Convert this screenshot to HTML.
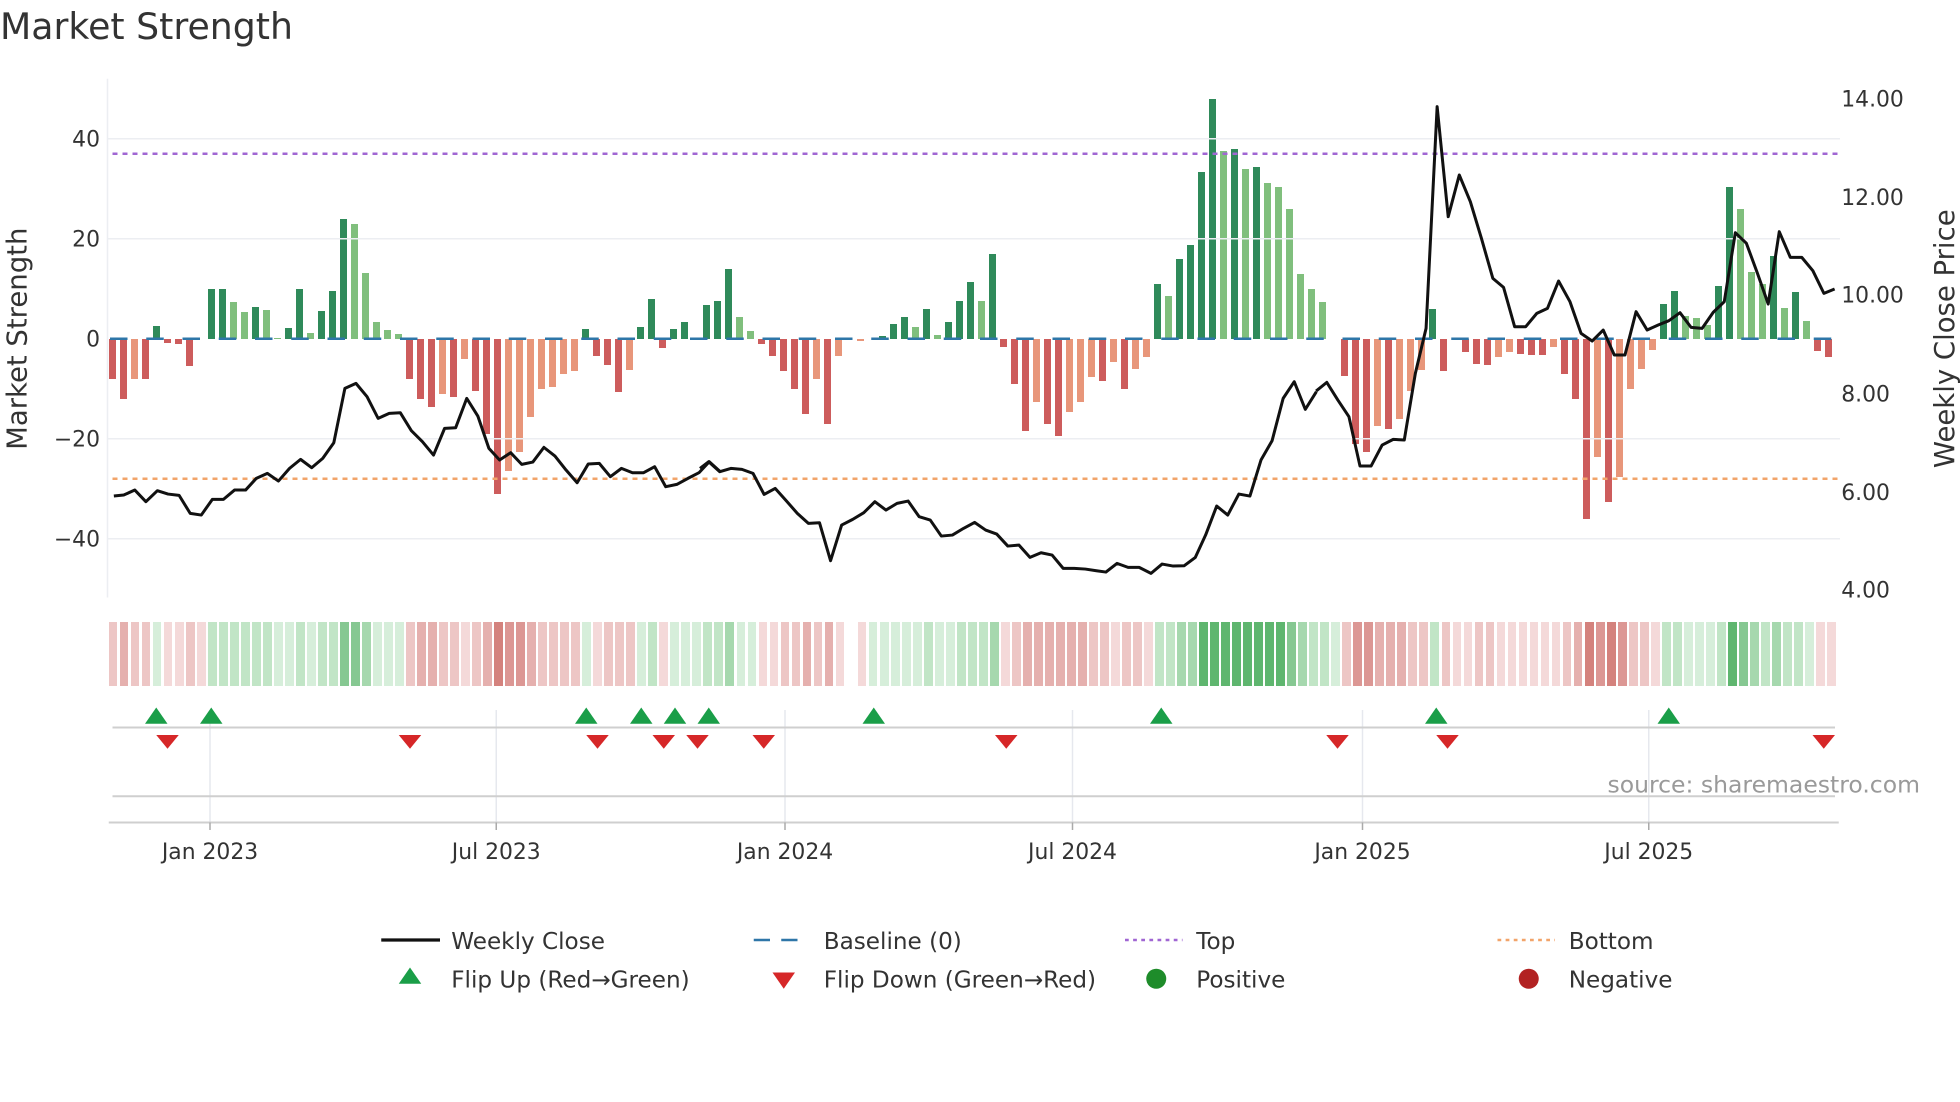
<!DOCTYPE html>
<html><head><meta charset="utf-8">
<style>
html,body{margin:0;padding:0;background:#fff;width:1960px;height:1102px;overflow:hidden;font-family:"DejaVu Sans","Liberation Sans",sans-serif}
#bars{position:absolute;left:107px;top:339px;height:0;display:flex;align-items:flex-start}
#bars b{flex:none;display:block;width:7.2px;margin:0 1.92px}
#bars b.G,#bars b.g,#bars b.z{transform:translateY(-100%)}
.G{background:#2f8a5a}.g{background:#80bf7d}.R{background:#cd5c5c}.r{background:#e8967a}
#strip{position:absolute;left:107.5px;top:622px;height:64px;display:flex}
#strip i{flex:none;display:block;width:8.8px;margin:0 1.12px;height:64px}
.r1{background:#f4d9d9}.r2{background:#edc6c5}.r3{background:#e5b0ae}.r4{background:#dc9794}.r5{background:#d4827d}
.g1{background:#d6eeda}.g2{background:#c1e5c6}.g3{background:#a6d8ae}.g4{background:#86c892}.g5{background:#5fb66f}.x0{background:transparent}
svg{position:absolute;left:0;top:0}
</style></head><body>
<div id="bars">
<b class="R" style="height:40px"></b><b class="R" style="height:60px"></b><b class="r" style="height:40px"></b><b class="R" style="height:40px"></b><b class="G" style="height:13px"></b><b class="R" style="height:4px"></b><b class="R" style="height:5px"></b><b class="R" style="height:27px"></b><b class="z" style="height:0"></b><b class="G" style="height:50px"></b>
<b class="G" style="height:50px"></b><b class="g" style="height:37px"></b><b class="g" style="height:27px"></b><b class="G" style="height:32px"></b><b class="g" style="height:29px"></b><b class="g" style="height:1px"></b><b class="G" style="height:11px"></b><b class="G" style="height:50px"></b><b class="g" style="height:6px"></b><b class="G" style="height:28px"></b>
<b class="G" style="height:48px"></b><b class="G" style="height:120px"></b><b class="g" style="height:115px"></b><b class="g" style="height:66px"></b><b class="g" style="height:17px"></b><b class="g" style="height:9px"></b><b class="g" style="height:5px"></b><b class="R" style="height:40px"></b><b class="R" style="height:60px"></b><b class="R" style="height:68px"></b>
<b class="r" style="height:55px"></b><b class="R" style="height:58px"></b><b class="r" style="height:20px"></b><b class="R" style="height:52px"></b><b class="R" style="height:95px"></b><b class="R" style="height:155px"></b><b class="r" style="height:132px"></b><b class="r" style="height:113px"></b><b class="r" style="height:78px"></b><b class="r" style="height:50px"></b>
<b class="r" style="height:48px"></b><b class="r" style="height:35px"></b><b class="r" style="height:32px"></b><b class="G" style="height:10px"></b><b class="R" style="height:17px"></b><b class="R" style="height:26px"></b><b class="R" style="height:53px"></b><b class="r" style="height:31px"></b><b class="G" style="height:12px"></b><b class="G" style="height:40px"></b>
<b class="R" style="height:9px"></b><b class="G" style="height:10px"></b><b class="G" style="height:17px"></b><b class="z" style="height:0"></b><b class="G" style="height:34px"></b><b class="G" style="height:38px"></b><b class="G" style="height:70px"></b><b class="g" style="height:22px"></b><b class="g" style="height:8px"></b><b class="R" style="height:5px"></b>
<b class="R" style="height:17px"></b><b class="R" style="height:32px"></b><b class="R" style="height:50px"></b><b class="R" style="height:75px"></b><b class="r" style="height:40px"></b><b class="R" style="height:85px"></b><b class="r" style="height:17px"></b><b class="z" style="height:0"></b><b class="r" style="height:2px"></b><b class="z" style="height:0"></b>
<b class="G" style="height:3px"></b><b class="G" style="height:15px"></b><b class="G" style="height:22px"></b><b class="g" style="height:12px"></b><b class="G" style="height:30px"></b><b class="g" style="height:4px"></b><b class="G" style="height:17px"></b><b class="G" style="height:38px"></b><b class="G" style="height:57px"></b><b class="g" style="height:38px"></b>
<b class="G" style="height:85px"></b><b class="R" style="height:8px"></b><b class="R" style="height:45px"></b><b class="R" style="height:92px"></b><b class="r" style="height:63px"></b><b class="R" style="height:85px"></b><b class="R" style="height:97px"></b><b class="r" style="height:73px"></b><b class="r" style="height:63px"></b><b class="r" style="height:38px"></b>
<b class="R" style="height:42px"></b><b class="r" style="height:23px"></b><b class="R" style="height:50px"></b><b class="r" style="height:30px"></b><b class="r" style="height:18px"></b><b class="G" style="height:55px"></b><b class="g" style="height:43px"></b><b class="G" style="height:80px"></b><b class="G" style="height:94px"></b><b class="G" style="height:167px"></b>
<b class="G" style="height:240px"></b><b class="g" style="height:188px"></b><b class="G" style="height:190px"></b><b class="g" style="height:170px"></b><b class="G" style="height:172px"></b><b class="g" style="height:156px"></b><b class="g" style="height:152px"></b><b class="g" style="height:130px"></b><b class="g" style="height:65px"></b><b class="g" style="height:50px"></b>
<b class="g" style="height:37px"></b><b class="z" style="height:0"></b><b class="R" style="height:37px"></b><b class="R" style="height:105px"></b><b class="R" style="height:113px"></b><b class="r" style="height:87px"></b><b class="R" style="height:90px"></b><b class="r" style="height:80px"></b><b class="r" style="height:52px"></b><b class="r" style="height:31px"></b>
<b class="G" style="height:30px"></b><b class="R" style="height:32px"></b><b class="z" style="height:0"></b><b class="R" style="height:13px"></b><b class="R" style="height:25px"></b><b class="R" style="height:26px"></b><b class="r" style="height:18px"></b><b class="r" style="height:13px"></b><b class="R" style="height:15px"></b><b class="R" style="height:16px"></b>
<b class="R" style="height:16px"></b><b class="r" style="height:8px"></b><b class="R" style="height:35px"></b><b class="R" style="height:60px"></b><b class="R" style="height:180px"></b><b class="r" style="height:118px"></b><b class="R" style="height:163px"></b><b class="r" style="height:138px"></b><b class="r" style="height:50px"></b><b class="r" style="height:30px"></b>
<b class="r" style="height:11px"></b><b class="G" style="height:35px"></b><b class="G" style="height:48px"></b><b class="g" style="height:23px"></b><b class="g" style="height:21px"></b><b class="g" style="height:14px"></b><b class="G" style="height:53px"></b><b class="G" style="height:152px"></b><b class="g" style="height:130px"></b><b class="g" style="height:67px"></b>
<b class="g" style="height:55px"></b><b class="G" style="height:83px"></b><b class="g" style="height:31px"></b><b class="G" style="height:47px"></b><b class="g" style="height:18px"></b><b class="R" style="height:12px"></b><b class="R" style="height:18px"></b>
</div>
<div id="strip">
<i class="r2"></i><i class="r3"></i><i class="r2"></i><i class="r2"></i><i class="g1"></i><i class="r1"></i><i class="r1"></i><i class="r2"></i><i class="r1"></i><i class="g2"></i>
<i class="g2"></i><i class="g2"></i><i class="g2"></i><i class="g2"></i><i class="g2"></i><i class="g1"></i><i class="g1"></i><i class="g2"></i><i class="g1"></i><i class="g2"></i>
<i class="g2"></i><i class="g4"></i><i class="g4"></i><i class="g3"></i><i class="g1"></i><i class="g1"></i><i class="g1"></i><i class="r2"></i><i class="r3"></i><i class="r3"></i>
<i class="r2"></i><i class="r2"></i><i class="r1"></i><i class="r2"></i><i class="r3"></i><i class="r5"></i><i class="r4"></i><i class="r4"></i><i class="r3"></i><i class="r2"></i>
<i class="r2"></i><i class="r2"></i><i class="r2"></i><i class="g1"></i><i class="r1"></i><i class="r2"></i><i class="r2"></i><i class="r2"></i><i class="g1"></i><i class="g2"></i>
<i class="r1"></i><i class="g1"></i><i class="g1"></i><i class="g1"></i><i class="g2"></i><i class="g2"></i><i class="g3"></i><i class="g1"></i><i class="g1"></i><i class="r1"></i>
<i class="r1"></i><i class="r2"></i><i class="r2"></i><i class="r3"></i><i class="r2"></i><i class="r3"></i><i class="r1"></i><i class="x0"></i><i class="r1"></i><i class="g1"></i>
<i class="g1"></i><i class="g1"></i><i class="g1"></i><i class="g1"></i><i class="g2"></i><i class="g1"></i><i class="g1"></i><i class="g2"></i><i class="g2"></i><i class="g2"></i>
<i class="g3"></i><i class="r1"></i><i class="r2"></i><i class="r3"></i><i class="r3"></i><i class="r3"></i><i class="r3"></i><i class="r3"></i><i class="r3"></i><i class="r2"></i>
<i class="r2"></i><i class="r1"></i><i class="r2"></i><i class="r2"></i><i class="r1"></i><i class="g2"></i><i class="g2"></i><i class="g3"></i><i class="g3"></i><i class="g5"></i>
<i class="g5"></i><i class="g5"></i><i class="g5"></i><i class="g5"></i><i class="g5"></i><i class="g5"></i><i class="g5"></i><i class="g4"></i><i class="g3"></i><i class="g2"></i>
<i class="g2"></i><i class="g1"></i><i class="r2"></i><i class="r4"></i><i class="r4"></i><i class="r3"></i><i class="r3"></i><i class="r3"></i><i class="r2"></i><i class="r2"></i>
<i class="g2"></i><i class="r2"></i><i class="r1"></i><i class="r1"></i><i class="r2"></i><i class="r2"></i><i class="r1"></i><i class="r1"></i><i class="r1"></i><i class="r1"></i>
<i class="r1"></i><i class="r1"></i><i class="r2"></i><i class="r3"></i><i class="r5"></i><i class="r4"></i><i class="r5"></i><i class="r4"></i><i class="r2"></i><i class="r2"></i>
<i class="r1"></i><i class="g2"></i><i class="g2"></i><i class="g1"></i><i class="g1"></i><i class="g1"></i><i class="g2"></i><i class="g5"></i><i class="g4"></i><i class="g3"></i>
<i class="g2"></i><i class="g3"></i><i class="g2"></i><i class="g2"></i><i class="g1"></i><i class="r1"></i><i class="r1"></i>
</div>
<svg width="1960" height="1102" viewBox="0 0 1568 881.6" xmlns="http://www.w3.org/2000/svg" font-family="DejaVu Sans, Liberation Sans, sans-serif">
<text x="0" y="31" font-size="29" fill="#333">Market Strength</text>
<g stroke="#eceef2" stroke-width="1.2">
<line x1="86" y1="63" x2="86" y2="478"/>
<line x1="86" y1="111" x2="1472" y2="111"/><line x1="86" y1="191" x2="1472" y2="191"/>
<line x1="86" y1="351" x2="1472" y2="351"/><line x1="86" y1="431" x2="1472" y2="431"/>
</g>
<g font-size="17.5" fill="#333" text-anchor="end">
<text x="80" y="117">40</text><text x="80" y="197">20</text><text x="80" y="277">0</text>
<text x="80" y="357">−20</text><text x="80" y="437">−40</text>
</g>
<g font-size="17.5" fill="#333">
<text x="1473" y="85">14.00</text><text x="1473" y="164">12.00</text><text x="1473" y="242">10.00</text>
<text x="1473" y="321">8.00</text><text x="1473" y="400">6.00</text><text x="1473" y="478">4.00</text>
</g>
<text transform="translate(21,271) rotate(-90)" text-anchor="middle" font-size="22" fill="#333">Market Strength</text>
<text transform="translate(1563,271) rotate(-90)" text-anchor="middle" font-size="22" fill="#333">Weekly Close Price</text>
<line x1="90" y1="123" x2="1470" y2="123" stroke="#a066d3" stroke-width="2" stroke-dasharray="4 4"/>
<line x1="90" y1="383" x2="1470" y2="383" stroke="#f2a46a" stroke-width="2" stroke-dasharray="4 4"/>
<line x1="88" y1="271" x2="1470" y2="271" stroke="#2e76a8" stroke-width="2" stroke-dasharray="14 15"/>
<g fill="none" stroke="#111" stroke-width="3" stroke-linejoin="round">
<polyline vector-effect="non-scaling-stroke" transform="translate(80,64) scale(0.3165,0.2667)" points="35,1248 60,1245 88,1230 116,1265 145,1232 172,1242 200,1246 228,1300 256,1305 284,1258 312,1258 340,1230 368,1230 395,1195 423,1180 451,1203 479,1165 507,1138 535,1163 563,1135 591,1088 619,925 647,910 675,950 703,1015 731,1000 759,998 787,1052 815,1085 843,1125 871,1045 899,1043 927,955 955,1008 983,1105 1010,1140 1038,1118 1066,1153 1094,1146 1122,1102 1150,1128 1178,1170 1206,1208 1234,1152 1262,1150 1290,1190 1318,1165 1346,1178 1374,1178 1402,1160 1430,1220 1458,1213 1486,1195 1514,1178 1540,1145 1568,1175"/>
<polyline vector-effect="non-scaling-stroke" transform="translate(560,64) scale(0.3165,0.2667)" points="0,1165 22,1145 50,1175 78,1165 106,1168 134,1180 162,1243 190,1225 218,1262 246,1300 274,1330 302,1328 330,1442 358,1335 386,1318 414,1298 442,1265 470,1290 498,1270 526,1263 554,1310 582,1320 610,1368 638,1365 666,1345 694,1327 722,1350 750,1362 778,1398 806,1395 834,1432 862,1418 890,1425 918,1465 946,1465 974,1467 1002,1472 1026,1476 1054,1450 1082,1462 1110,1462 1140,1480 1168,1452 1196,1458 1224,1457 1252,1432 1278,1365 1306,1278 1334,1305 1362,1242 1390,1248 1418,1140 1446,1082 1474,955 1502,905 1530,988 1558,935"/>
<polyline vector-effect="non-scaling-stroke" transform="translate(1040,64) scale(0.2857,0.2667)" points="45,933 75,907 106,960 137,1010 168,1158 199,1158 230,1095 261,1078 292,1080 323,880 353,745 384,80 415,410 446,285 477,365 508,475 540,595 570,622 601,740 632,740 663,700 693,685 724,603 756,665 787,760 818,783 849,750 880,825 910,825 941,695 972,750 1003,735 1033,722 1064,698 1095,742 1126,745 1157,697 1188,665 1219,458 1250,490 1281,580 1311,672 1342,455 1373,532 1405,532 1436,572 1467,640 1497,627"/>
</g>
<g stroke="#e6e8ee" stroke-width="1.2">
<line x1="168" y1="568" x2="168" y2="658"/><line x1="397" y1="568" x2="397" y2="658"/><line x1="628" y1="568" x2="628" y2="658"/>
<line x1="858" y1="568" x2="858" y2="658"/><line x1="1090" y1="568" x2="1090" y2="658"/><line x1="1319" y1="568" x2="1319" y2="658"/>
</g>
<g stroke="#cfcfcf" stroke-width="1.6">
<line x1="90" y1="582" x2="1468" y2="582"/><line x1="90" y1="637" x2="1468" y2="637"/><line x1="87" y1="658" x2="1471" y2="658"/>
</g>
<g stroke="#aaa" stroke-width="1.2">
<line x1="168" y1="658" x2="168" y2="664"/><line x1="397" y1="658" x2="397" y2="664"/><line x1="628" y1="658" x2="628" y2="664"/>
<line x1="858" y1="658" x2="858" y2="664"/><line x1="1090" y1="658" x2="1090" y2="664"/><line x1="1319" y1="658" x2="1319" y2="664"/>
</g>
<g fill="#1a9e48">
<polygon points="116,579 125,566 134,579"/><polygon points="160,579 169,566 178,579"/><polygon points="460,579 469,566 478,579"/>
<polygon points="504,579 513,566 522,579"/><polygon points="531,579 540,566 549,579"/><polygon points="558,579 567,566 576,579"/>
<polygon points="690,579 699,566 708,579"/><polygon points="920,579 929,566 938,579"/><polygon points="1140,579 1149,566 1158,579"/>
<polygon points="1326,579 1335,566 1344,579"/>
</g>
<g fill="#d62728">
<polygon points="125,588 143,588 134,599"/><polygon points="319,588 337,588 328,599"/><polygon points="469,588 487,588 478,599"/>
<polygon points="522,588 540,588 531,599"/><polygon points="549,588 567,588 558,599"/><polygon points="602,588 620,588 611,599"/>
<polygon points="796,588 814,588 805,599"/><polygon points="1061,588 1079,588 1070,599"/><polygon points="1149,588 1167,588 1158,599"/>
<polygon points="1450,588 1468,588 1459,599"/>
</g>
<text x="1536" y="634" text-anchor="end" font-size="18.8" fill="#9a9a9a">source: sharemaestro.com</text>
<g font-size="17.5" fill="#333" text-anchor="middle">
<text x="168" y="687">Jan 2023</text><text x="397" y="687">Jul 2023</text><text x="628" y="687">Jan 2024</text>
<text x="858" y="687">Jul 2024</text><text x="1090" y="687">Jan 2025</text><text x="1319" y="687">Jul 2025</text>
</g>
<line x1="305" y1="752" x2="352" y2="752" stroke="#111" stroke-width="2.6"/>
<line x1="603" y1="752" x2="647" y2="752" stroke="#2e76a8" stroke-width="2" stroke-dasharray="13 9"/>
<line x1="900" y1="752" x2="946" y2="752" stroke="#a066d3" stroke-width="2" stroke-dasharray="3 3.5"/>
<line x1="1198" y1="752" x2="1244" y2="752" stroke="#f2a46a" stroke-width="2" stroke-dasharray="3 3.5"/>
<polygon points="319,787 328,774 337,787" fill="#1a9e48"/>
<polygon points="618,778 636,778 627,791" fill="#d62728"/>
<circle cx="925" cy="783" r="8" fill="#1e8c2a"/>
<circle cx="1223" cy="783" r="8" fill="#b22222"/>
<g font-size="18.5" fill="#333">
<text x="361" y="759">Weekly Close</text><text x="659" y="759">Baseline (0)</text><text x="957" y="759">Top</text><text x="1255" y="759">Bottom</text>
<text x="361" y="790">Flip Up (Red→Green)</text><text x="659" y="790">Flip Down (Green→Red)</text><text x="957" y="790">Positive</text><text x="1255" y="790">Negative</text>
</g>
</svg>
</body></html>
